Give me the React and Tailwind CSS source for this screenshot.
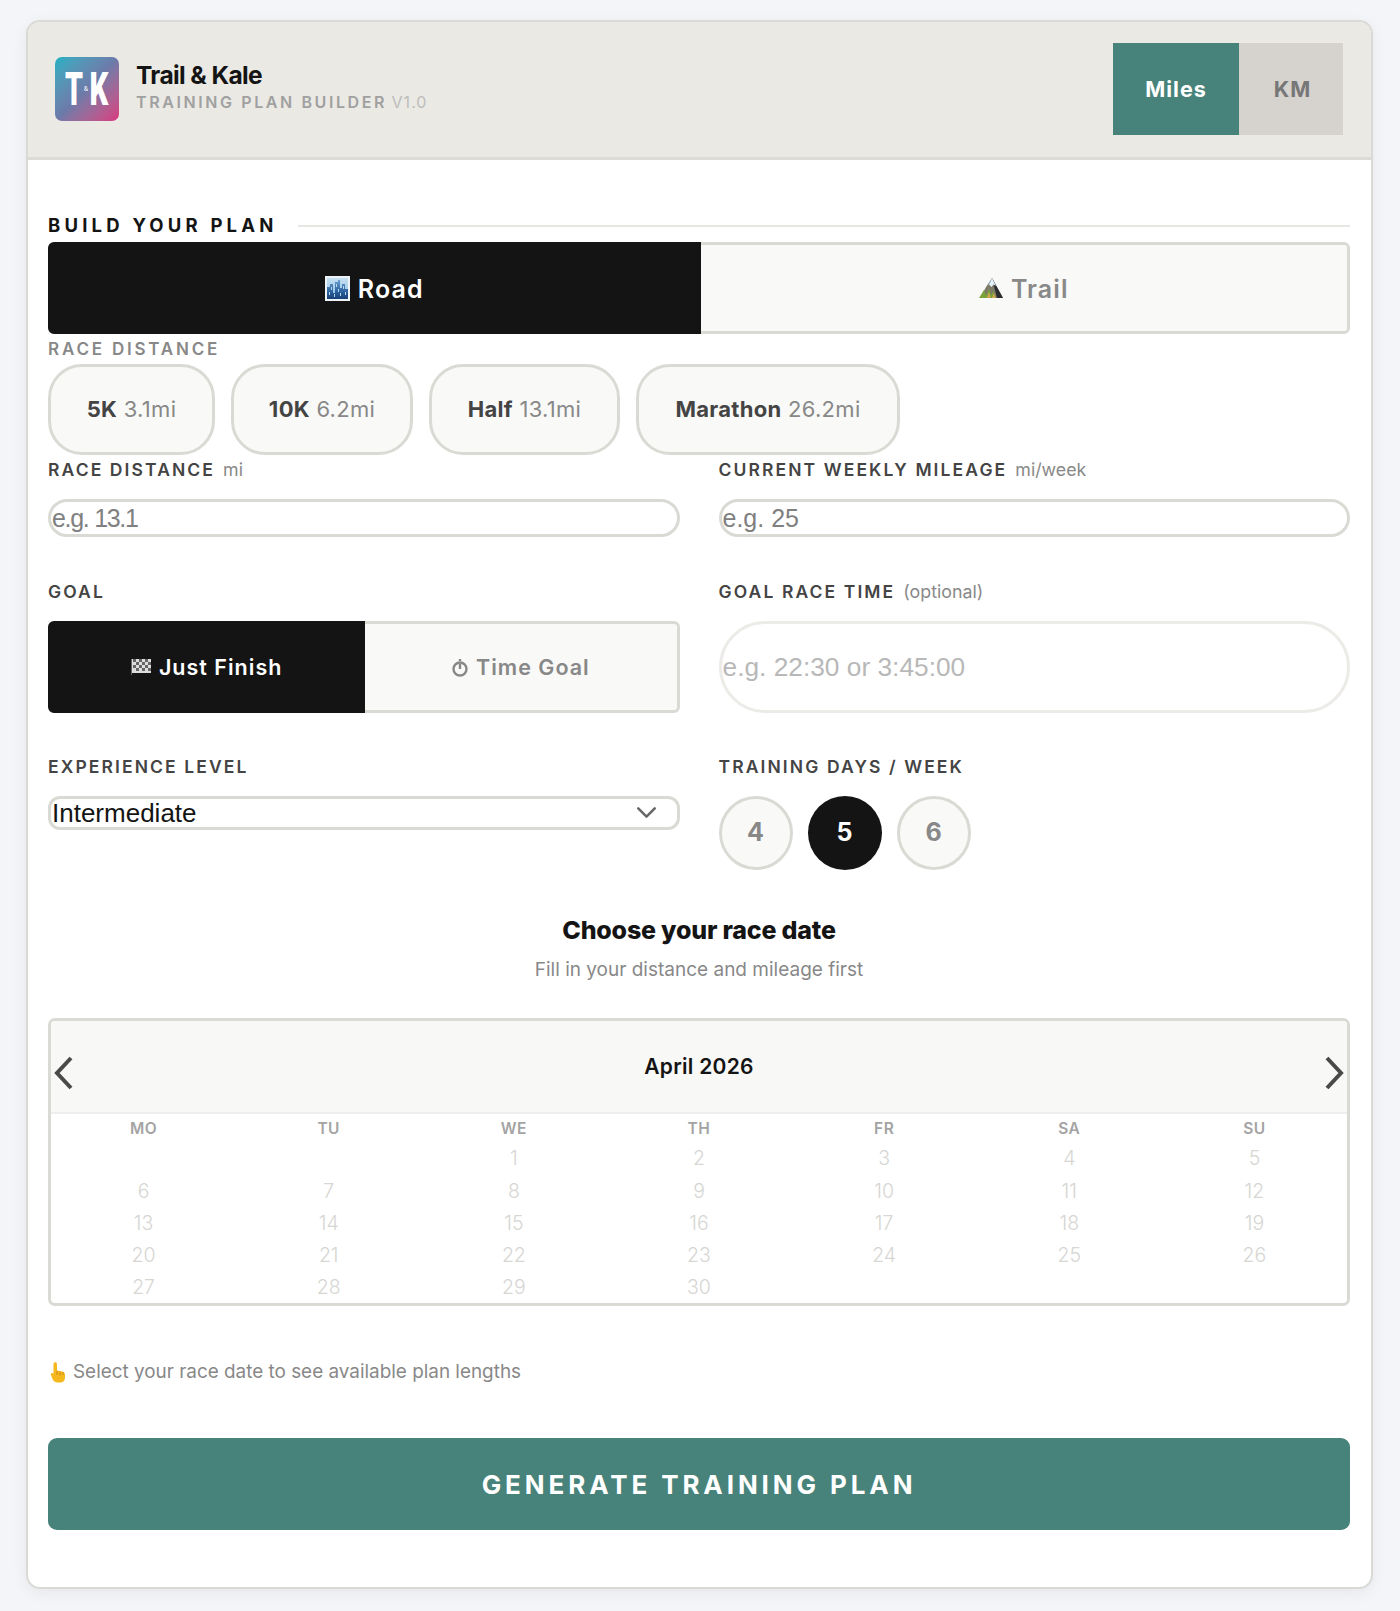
import React from 'react';
import { ChevronDown } from 'lucide-react';

const sans = 'font-[Inter,sans-serif]';
const helv = "font-['Liberation_Sans',Arial,sans-serif]";

const CityIcon = () => (
  <svg width="25" height="25" viewBox="0 0 25 25" className="shrink-0">
    <defs>
      <linearGradient id="citySky" x1="0" y1="0" x2="0" y2="1">
        <stop offset="0" stopColor="#c3dff2" />
        <stop offset="1" stopColor="#8dbde2" />
      </linearGradient>
      <linearGradient id="cityBlock" x1="0" y1="0" x2="0" y2="1">
        <stop offset="0" stopColor="#6a9fce" />
        <stop offset="0.6" stopColor="#2c629f" />
        <stop offset="1" stopColor="#163f75" />
      </linearGradient>
    </defs>
    <rect width="25" height="25" fill="#eef3f7" />
    <rect x="2" y="2" width="21" height="21" fill="url(#citySky)" />
    <path d="M2 23V11h3V8h3v9h2V6h3V4h2v8h2V8h3v5h3v10z" fill="url(#cityBlock)" />
    <path d="M6 11h1v3H6zM11 8h1v3h-1zM13 13h1v3h-1zM18 10h1v3h-1zM4 16h1v3H4zM9 18h1v3H9zM15 17h1v3h-1zM20 16h1v3h-1z" fill="#b6d5ee" />
  </svg>
);

const MountainIcon = () => (
  <svg width="24" height="22" viewBox="0 0 24 22" className="shrink-0">
    <path d="M13 1 L24 21 L1 21 L7 10z" fill="#7d7a66" />
    <path d="M13 1 L24 21 L18 21 L15 9z" fill="#2a2c30" />
    <path d="M13 1 L17 9 L14.500 7.500 L12.500 10 L10 7.500z" fill="#e4f0fa" />
    <path d="M13 1 L10 7.500 L8.500 8.500z" fill="#8fbde4" />
    <path d="M0 21 L5 13 L8 21z M6 21 L10 12 L13 21z M11 21 L14 14 L17 21z" fill="#7ba23a" />
    <path d="M8 21 L10 15 L11.500 21z M13 21 L15 16 L16.500 21z" fill="#d9a650" />
  </svg>
);

const FlagIcon = () => (
  <svg width="20" height="16" viewBox="0 0 20 16" className="shrink-0">
    <rect width="20" height="14" fill="#dddddd" />
    <path d="M2 0h3v3H2zM8 0h3v3H8zM14 0h3v3h-3zM5 3h3v3H5zM11 3h3v3h-3zM17 3h3v3h-3zM2 6h3v3H2zM8 6h3v3H8zM14 6h3v3h-3zM5 9h3v3H5zM11 9h3v3h-3zM17 9h3v3h-3z" fill="#666666" />
    <rect width="1" height="16" fill="#666666" />
  </svg>
);

const WatchIcon = () => (
  <svg width="16" height="19" viewBox="0 0 16 19" fill="none" stroke="#888888" className="shrink-0">
    <circle cx="8" cy="11" r="6.500" strokeWidth="2.400" />
    <path d="M8 1v2M8 6v5" strokeWidth="2.400" />
  </svg>
);

const FingerIcon = () => (
  <svg width="16" height="21" viewBox="0 0 16 21" className="shrink-0">
    <path d="M3.500 2c0-2.400 3.500-2.400 3.500 0v6.500l5 1c2 .5 3 1.700 3 3.500v2.500c0 3-2 5-5 5H7.500C5 20.500 3.500 19 2.500 17L1 13c-.5-1.500 1-2.500 2-1.500l.5.6z" fill="#f5b81f" />
    <path d="M7 9v4M10 9.500v4M13 10v3" stroke="#d08a10" strokeWidth="1" />
  </svg>
);

function Label({ children, hint }) {
  return (
    <div className={`h-5 flex items-center gap-2 mb-[19px] ${sans}`}>
      <span className="text-[17.500px] font-semibold tracking-[2.100px] text-[#444444]">{children}</span>
      {hint && <span className="text-[17.800px] text-[#888888]">{hint}</span>}
    </div>
  );
}

function Segment({ left, right, tall }) {
  return (
    <div className={`flex h-[92px] ${sans} font-semibold ${tall ? 'text-[25px] tracking-[1.100px]' : 'text-[21.500px] tracking-[1px]'}`}>
      <button className="relative z-10 flex-1 flex items-center justify-center gap-2 bg-[#141414] text-white border-[3px] border-[#141414] rounded-l-[6px]">
        {left}
      </button>
      <button className="flex-1 -ml-[3px] flex items-center justify-center gap-2 bg-[#f9f9f7] text-[#888888] border-[3px] border-[#dadad5] rounded-r-[6px]">
        {right}
      </button>
    </div>
  );
}

function Chip({ name, dist, width }) {
  return (
    <button className={`${width} h-[91px] rounded-[34px] border-[3px] border-[#dadad5] bg-[#f9f9f7] text-[22px] tracking-[0.3px] ${sans}`}>
      <span className="font-bold text-[#444444]">{name}</span>{' '}
      <span className="text-[#888888] font-normal">{dist}</span>
    </button>
  );
}

function DayButton({ day, active }) {
  return (
    <button className={`w-[74px] h-[74px] rounded-full text-[25px] font-bold ${sans} ${active ? 'bg-[#141414] text-white' : 'bg-[#f9f9f7] text-[#888888] border-[3px] border-[#dadad5]'}`}>
      {day}
    </button>
  );
}

const weekDays = ['MO', 'TU', 'WE', 'TH', 'FR', 'SA', 'SU'];
const leadingBlanks = [null, null];

export default function App() {
  const days = [...leadingBlanks, ...Array.from({ length: 30 }, (_, i) => i + 1)];

  return (
    <div className="min-h-[1611px] bg-[#f4f5f8] pt-5 pl-[26px] pr-[27px] pb-6">
      <div className="rounded-[14px] border-2 border-[#d9d9d5] bg-white overflow-hidden shadow-[0_4px_16px_rgba(0,0,0,0.06)]">
        {/* Header */}
        <div className="h-[138px] bg-[#eae9e4] border-b-[3px] border-[#dcdbd6] flex items-center justify-between pl-[27px] pr-[28px]">
          <div className="flex items-center gap-[17px] -mt-[1px]">
            <div className="w-16 h-16 rounded-[7px] bg-gradient-to-br from-[#14b1c4] via-[#6c7aa9] to-[#d8347f] flex items-center justify-center gap-[2px] text-white font-black text-[46px] leading-none font-[Roboto,sans-serif]">
              <span className="w-4 flex justify-center scale-x-[0.62]">T</span>
              <span className="text-[7px] font-normal">&amp;</span>
              <span className="w-[18px] flex justify-center scale-x-[0.64]">K</span>
            </div>
            <div className={`-mt-[5px] ${sans}`}>
              <div className="text-[24.500px] leading-[30px] font-bold tracking-[-0.6px] text-[#141414]">Trail &amp; Kale</div>
              <div className="text-[16px] leading-[22px] mt-[1px]">
                <span className="font-semibold tracking-[2.600px] text-[#a0a0a0]">TRAINING PLAN BUILDER</span>{' '}
                <span className="text-[#bdbdbb] tracking-[1px]">V1.0</span>
              </div>
            </div>
          </div>
          <div className={`flex h-[92px] -mt-[1px] font-bold text-[21.500px] tracking-[1px] ${sans}`}>
            <button className="w-[126px] bg-[#47837a] text-white">Miles</button>
            <button className="w-[104px] pl-[3px] bg-[#d6d2ce] text-[#777777]">KM</button>
          </div>
        </div>

        {/* Form */}
        <div className="pl-[20px] pr-[21px] pt-[56px] pb-[57px]">
          <div className="flex items-center gap-5 h-5 mb-[6px]">
            <span className={`text-[18.500px] font-bold tracking-[4.200px] text-[#141414] ${sans}`}>BUILD YOUR PLAN</span>
            <div className="flex-1 h-[2px] bg-[#e6e6e3]" />
          </div>

          <Segment
            tall
            left={<><CityIcon /> <span className="mt-[3px]">Road</span></>}
            right={<><MountainIcon /> <span className="mt-[3px]">Trail</span></>}
          />

          <div className={`mt-[8px] h-4 flex items-center text-[17px] font-semibold tracking-[2.800px] text-[#888888] ${sans}`}>RACE DISTANCE</div>
          <div className="flex gap-4 mt-[6px]">
            <Chip name="5K" dist="3.1mi" width="w-[167px]" />
            <Chip name="10K" dist="6.2mi" width="w-[182px]" />
            <Chip name="Half" dist="13.1mi" width="w-[191px]" />
            <Chip name="Marathon" dist="26.2mi" width="w-[264px]" />
          </div>

          <div className="grid grid-cols-2 gap-x-[39px] mt-[5px]">
            <div>
              <Label hint="mi">RACE DISTANCE</Label>
              <input placeholder="e.g. 13.1" className={`w-full h-[38px] rounded-full border-[3px] border-[#dadad5] px-[1px] text-[25px] tracking-[-1.300px] placeholder:text-[#808080] outline-none ${helv}`} />
            </div>
            <div>
              <Label hint="mi/week">CURRENT WEEKLY MILEAGE</Label>
              <input placeholder="e.g. 25" className={`w-full h-[38px] rounded-full border-[3px] border-[#dadad5] px-[1px] text-[25px] placeholder:text-[#808080] outline-none ${helv}`} />
            </div>

            <div className="mt-[45px]">
              <Label>GOAL</Label>
              <Segment
                left={<><FlagIcon /> Just Finish</>}
                right={<><WatchIcon /> Time Goal</>}
              />
            </div>
            <div className="mt-[45px]">
              <Label hint="(optional)">GOAL RACE TIME</Label>
              <input placeholder="e.g. 22:30 or 3:45:00" className={`w-full h-[92px] rounded-full border-[3px] border-[#ecebe8] px-[1px] text-[26.300px] placeholder:text-[#b8b8b8] outline-none ${helv}`} />
            </div>

            <div className="mt-[44px]">
              <Label>EXPERIENCE LEVEL</Label>
              <div className="relative">
                <select defaultValue="Intermediate" className={`w-full h-[34px] rounded-[12px] border-[3px] border-[#dadad5] px-[1px] text-[26px] leading-none text-[#141414] bg-white appearance-none outline-none ${helv}`}>
                  <option>Beginner</option>
                  <option>Intermediate</option>
                  <option>Advanced</option>
                </select>
                <ChevronDown className="absolute right-[17px] top-0 text-[#666666]" size={33} strokeWidth={1.8} />
              </div>
            </div>
            <div className="mt-[44px]">
              <Label>TRAINING DAYS / WEEK</Label>
              <div className="flex gap-[15px]">
                <DayButton day={4} />
                <DayButton day={5} active />
                <DayButton day={6} />
              </div>
            </div>
          </div>

          {/* Race date */}
          <div className={`text-center mt-[43px] ${sans}`}>
            <h2 className="text-[25px] leading-[34px] font-extrabold tracking-[-0.2px] text-[#141414]">Choose your race date</h2>
            <p className="mt-[9px] text-[19px] leading-[28px] text-[#888888]">Fill in your distance and mileage first</p>
          </div>

          <div className={`mt-[34px] h-[288px] rounded-[7px] border-[3px] border-[#dadad5] overflow-hidden ${sans}`}>
            <div className="h-[93px] bg-[#f8f8f6] border-b-2 border-[#eeeeec] flex items-center justify-between px-[1px]">
              <svg width="22" height="34" viewBox="0 0 22 34" fill="none" stroke="#4a4a4a" strokeWidth="4" className="mt-3">
                <path d="M19 2 5 17l14 15" />
              </svg>
              <span className="text-[21px] font-semibold tracking-[0.3px] text-[#141414]">April 2026</span>
              <svg width="22" height="34" viewBox="0 0 22 34" fill="none" stroke="#4a4a4a" strokeWidth="4" className="mt-3">
                <path d="m3 2 14 15L3 32" />
              </svg>
            </div>
            <div className="grid grid-cols-7 text-center">
              {weekDays.map((d) => (
                <div key={d} className="h-[29px] flex items-center justify-center text-[15.500px] font-semibold tracking-[0.5px] text-[#a3a3a3]">{d}</div>
              ))}
              {days.map((d, i) => (
                <div key={i} className="h-[32.200px] flex items-center justify-center text-[19.500px] font-light text-[#d6d6d3]">{d}</div>
              ))}
            </div>
          </div>

          <div className={`mt-[52px] h-7 flex items-center gap-[7px] pl-[2px] text-[18.900px] text-[#888888] ${sans}`}>
            <FingerIcon />
            <span>Select your race date to see available plan lengths</span>
          </div>

          <button className={`mt-[52px] w-full h-[92px] rounded-[9px] bg-[#47837a] text-white text-[26px] font-bold tracking-[3.900px] ${sans}`}>
            GENERATE TRAINING PLAN
          </button>
        </div>
      </div>
    </div>
  );
}
